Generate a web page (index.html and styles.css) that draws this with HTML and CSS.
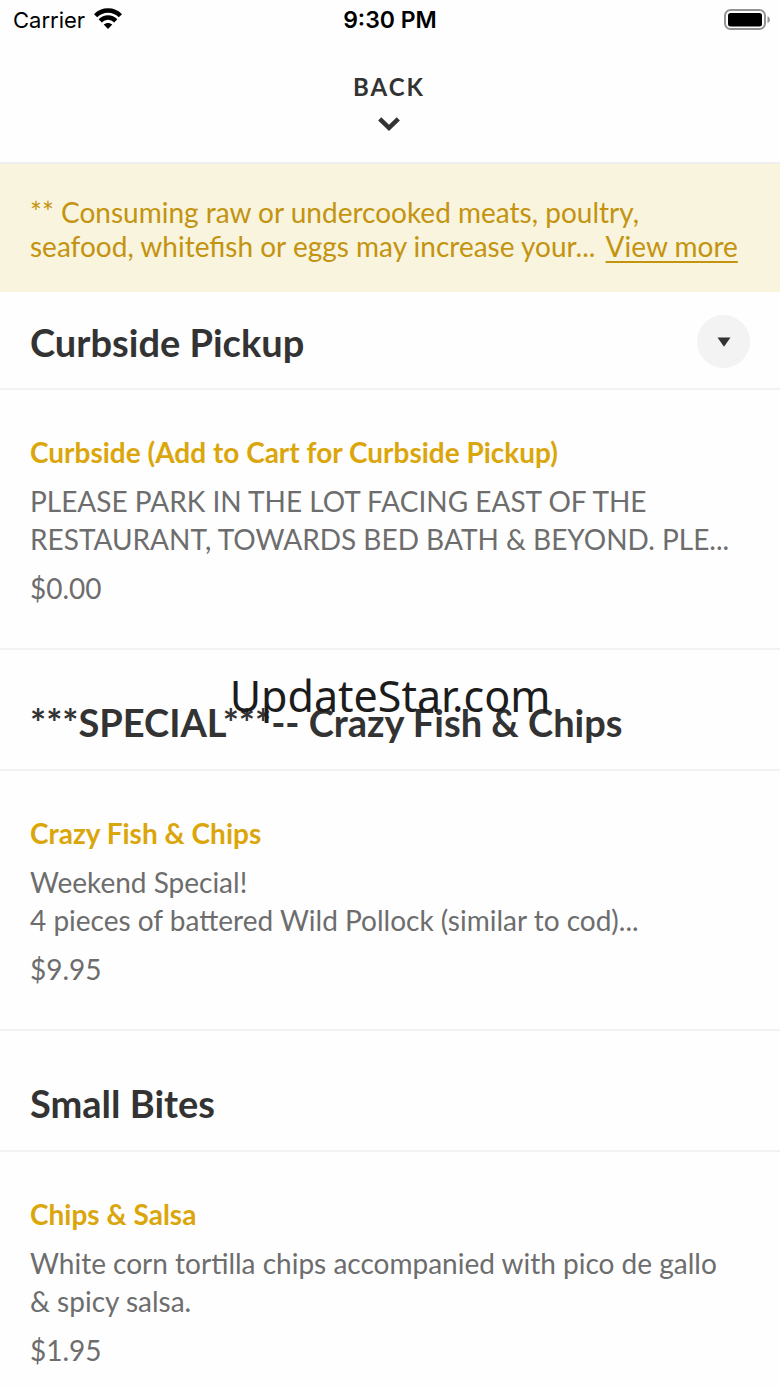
FILE: index.html
```html
<!DOCTYPE html>
<html lang="en">
<head>
<meta charset="utf-8">
<meta name="viewport" content="width=device-width, initial-scale=1">
<title>Menu</title>
<link rel="stylesheet" href="styles.css">
</head>
<body>
<div class="screen">
  <div class="status">
    <div class="carrier">
      <span>Carrier</span>
      <svg class="wifi" width="28" height="21" viewBox="0 0 28 21" aria-hidden="true">
        <path fill="none" stroke="#000" stroke-width="4.500" d="M1.600 7.800C8.400.8 19.600.8 26.400 7.800M6.200 12.900c4.500-4.400 11.100-4.400 15.600 0"/>
        <path d="M14 21l-4.300-4.400c2.500-2.200 6.100-2.200 8.600 0z"/>
      </svg>
    </div>
    <div class="time">9:30 PM</div>
    <svg class="battery" width="46" height="22" viewBox="0 0 46 22" aria-hidden="true">
      <rect x="1" y="1" width="40" height="19" rx="5.500" fill="none" stroke="#949494" stroke-width="2"/>
      <rect x="4" y="4" width="34" height="13.500" rx="2.500"/>
      <path fill="#949494" d="M43.500 7.300c3.200 1.200 3.200 5.700 0 6.900z"/>
    </svg>
  </div>
  <header class="topbar">
    <button class="back" type="button">
      <span>BACK</span>
      <svg width="22" height="14" viewBox="0 0 22 14" aria-hidden="true"><path fill="none" stroke="#333" stroke-width="4.500" d="M1.700 1.800L11 10.800l9.300-9"/></svg>
    </button>
  </header>
  <main>
    <p class="notice">** Consuming raw or undercooked meats, poultry,<br>seafood, whitefish or eggs may increase your... <a class="more" href="#">View more</a></p>
    <section>
      <div class="section-head section-head-first">
        <h2>Curbside Pickup</h2>
        <button class="toggle" type="button" aria-label="Choose section">
          <svg width="14" height="10" viewBox="0 0 14 10" aria-hidden="true"><path fill="#333" d="M.5.5h13L7 9.800z"/></svg>
        </button>
      </div>
      <article class="item">
        <h3>Curbside (Add to Cart for Curbside Pickup)</h3>
        <p class="desc">PLEASE PARK IN THE LOT FACING EAST OF THE<br>RESTAURANT, TOWARDS BED BATH &amp; BEYOND. PLE...</p>
        <p>$0.00</p>
      </article>
    </section>
    <section>
      <div class="section-head">
        <h2>***SPECIAL***-- Crazy Fish &amp; Chips</h2>
      </div>
      <article class="item">
        <h3>Crazy Fish &amp; Chips</h3>
        <p class="desc">Weekend Special!<br>4 pieces of battered Wild Pollock (similar to cod)...</p>
        <p>$9.95</p>
      </article>
    </section>
    <section>
      <div class="section-head">
        <h2>Small Bites</h2>
      </div>
      <article class="item item-last">
        <h3>Chips &amp; Salsa</h3>
        <p class="desc">White corn tortilla chips accompanied with pico de gallo<br>&amp; spicy salsa.</p>
        <p>$1.95</p>
      </article>
    </section>
  </main>
  <div class="watermark">UpdateStar.com</div>
</div>
</body>
</html>
```
FILE: styles.css
```css
* {
  box-sizing: border-box;
}

body,
h2,
h3,
p {
  margin: 0;
}

body {
  background: #fefefe;
  color: #6d6d6d;
  font-family: Lato, "Liberation Sans", sans-serif;
  font-size: 28px;
  line-height: 38px;
}

button {
  border: 0;
  padding: 0;
  color: #333;
  font-family: inherit;
}

.screen {
  position: relative;
}

.status {
  display: grid;
  grid-template-columns: 1fr auto 1fr;
  align-items: center;
  height: 40px;
  padding: 0 10px;
  color: #000;
  font-family: Inter, "Liberation Sans", sans-serif;
  font-size: 22px;
  line-height: 28px;
}

.carrier {
  display: flex;
  align-items: center;
  gap: 9px;
  padding-left: 3px;
}

.wifi {
  margin-bottom: 3px;
}

.time {
  font-size: 23px;
  font-weight: 600;
}

.battery {
  justify-self: end;
}

.topbar {
  display: flex;
  justify-content: center;
  padding: 31px 2px 31px 0;
  border-bottom: 2px solid #efefef;
}

.back {
  display: flex;
  flex-direction: column;
  align-items: center;
  gap: 14px;
  background: none;
  font-size: 24px;
  font-weight: 700;
  line-height: 32px;
  letter-spacing: 2px;
}

.notice {
  padding: 31px 30px 29px;
  background: #f8f4de;
  color: #c4930f;
  font-size: 28px;
  line-height: 34px;
}

.more {
  margin-left: 3px;
  color: inherit;
  text-decoration-thickness: 2px;
  text-underline-offset: 4px;
}

.section-head {
  display: flex;
  align-items: center;
  justify-content: space-between;
  padding: 48px 30px 23px;
  border-bottom: 2px solid #f2f2f2;
}

.section-head-first {
  padding-top: 23px;
  padding-bottom: 20px;
}

h2 {
  color: #333;
  font-size: 38px;
  line-height: 48px;
}

.toggle {
  display: grid;
  place-items: center;
  width: 53px;
  height: 53px;
  border-radius: 50%;
  background: #f3f3f3;
}

.item {
  padding: 43px 30px 41px;
  border-bottom: 2px solid #f2f2f2;
}

.item-last {
  padding-bottom: 12px;
  border-bottom: 0;
}

h3 {
  color: #dba60b;
  font-size: 28px;
  line-height: 38px;
}

.desc {
  margin: 11px 0;
}

.watermark {
  position: absolute;
  top: 664px;
  left: 0;
  width: 100%;
  color: #1c1c1c;
  font-family: "Noto Sans", "Open Sans", sans-serif;
  font-size: 43px;
  line-height: 64px;
  text-align: center;
  pointer-events: none;
}
```
